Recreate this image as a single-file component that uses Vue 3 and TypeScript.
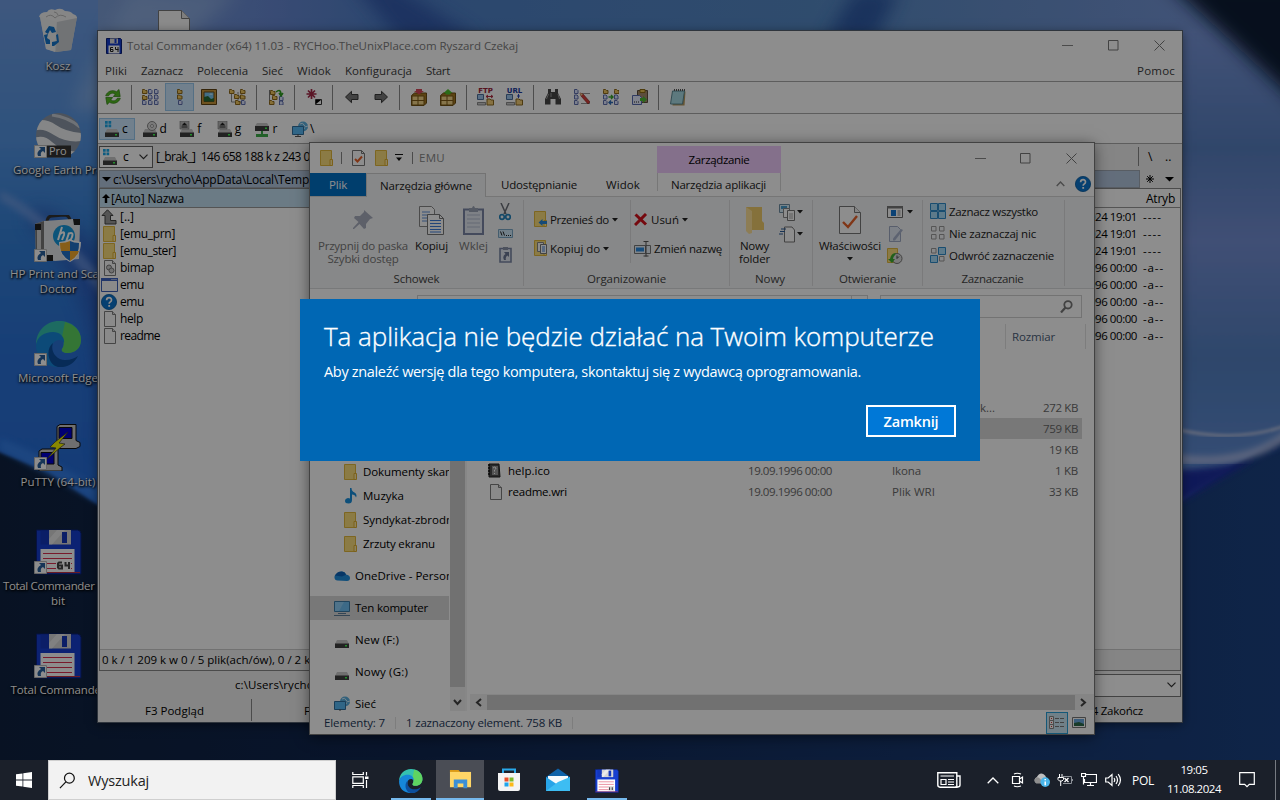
<script setup lang="ts">
import { h } from 'vue'
import type { Directive } from 'vue'

// Tracks a label so that it fills the given width.
const vFit: Directive<HTMLElement, number> = {
  mounted(el, { value }) {
    const range = document.createRange()
    range.selectNodeContents(el)
    const natural = range.getBoundingClientRect().width
    const count = (el.textContent ?? '').length
    if (count > 0) el.style.letterSpacing = `${((value - natural) / count).toFixed(3)}px`
  },
}

const folderBody =
  '<path d="M1.5.5h11v15h-11z" fill="#fbdf7e" stroke="#e3b93c"/><path d="M11 9.500h2.500v6H11z" fill="#ffe9a2" stroke="#e0b030"/>'
const pageBody =
  '<path d="M2.500.5h8l3 3v12h-11z" fill="#fafafa" stroke="#7d7d7d"/><path d="M10.500.5v3h3" fill="#ddd" stroke="#7d7d7d"/>'
const driveBody =
  '<path d="M3 8h10l2 4H1z" fill="#c9c9c9"/><path d="M1 11.500h14V16H1z" fill="#3f3f3f"/><path d="M11 13h2v1.500h-2z" fill="#3cff4f"/>'
const miniF = (x: number, y: number): string =>
  `<path d="M${x + 0.5} ${y + 1.5}v-1h2l1 1h1.500v3h-4.500z" fill="#f0c860" stroke="#8f6a1c"/>`
const miniD = (x: number, y: number): string =>
  `<path d="M${x + 0.5} ${y + 0.5}h2.500l1 1v3h-3.500z" fill="#dfe6ff" stroke="#5f6fae"/>`
const arrowBadge =
  '<path d="M.5 34.500h12v12H.5z" fill="#fff" stroke="#b9b9b9"/><path d="M5 36h6v6L9 40q-3 1-2 5H4q-2-4 3-7z" fill="#28609e"/>'
const floppyBody = (label: string): string =>
  `<path d="M2.500 3h41q3 0 3.500 3.500V47h-44.500z" fill="#173fd0" stroke="#0b2078"/><path d="M6.500 3.500h31v14h-31z" fill="#1437bb"/><path d="M15 3h22v14.500H15z" fill="#d5d5d5"/><path d="M18 17.500L31 3h-8L15 12v5.500z" fill="#fff" opacity=".5"/><path d="M28 5h5v11h-5z" fill="#1437bb"/><path d="M6.500 22h34v23h-34z" fill="#fff"/><path d="M9 26.500h29M9 31.500h29M9 36.500h29M9 41.500h29" stroke="#d93050"/><path d="M3 45.500h43" stroke="#c22f40"/>${label}`
const edgeBody =
  '<path d="M2 26C2 12 12 2 25 2c13 0 22 8 22 19 0 8-6 13-13 13-5 0-7-2-6-4 2-3 2-6 1-9-2-6-9-8-15-6C8 17 3 21 2 26z" fill="#35c1b0"/><path d="M31 3c10 3 16 9 16 18 0 8-6 13-13 13-5 0-7-2-6-4 3-4 2-8 0-12z" fill="#6ad84e" opacity=".8"/><path d="M2 26c1-8 8-13 17-13 7 0 12 5 11 11-1-2-3-3-5-3-5 0-8 5-7 11 2 8 9 13 18 12-4 4-9 5-14 4C10 47 2 38 2 26z" fill="#1687d9"/><path d="M19 24c-3 8 3 17 12 17 6 0 10-2 13-4-4 8-11 12-20 11C14 46 11 30 19 24z" fill="#0d4f9e"/>'
const netBody =
  '<circle cx="11" cy="5.500" r="5" fill="#5bb0e0"/><path d="M8 3q3-2 4 1t4 1M9 8l4-1" stroke="#d8f0ff" fill="none"/><path d="M.5 5.500h11v8H.5z" fill="#58b8f4" stroke="#2f6f9e"/><path d="M3 15.500h6M6 13v2" stroke="#555"/>'

const icons: Record<string, [number, number, string]> = {
  folder: [14, 16, folderBody],
  page: [15, 16, pageBody],
  gears: [15, 16, pageBody + '<circle cx="7" cy="7.500" r="2.500" fill="#ccc" stroke="#777"/><circle cx="9.500" cy="10.500" r="2.500" fill="#ccc" stroke="#777"/>'],
  app: [17, 14, '<path d="M.5.5h16v13H.5z" fill="#fafafa" stroke="#3c5fb5"/><path d="M0 0h17v3H0z" fill="#3c63c0"/><path d="M10.500 1.500h1m1 0h1m1 0h1" stroke="#fff"/>'],
  help: [16, 16, '<circle cx="8" cy="8" r="7.600" fill="#0b74cc" stroke="#085a9e" stroke-width=".8"/><path d="M5.600 6.200Q5.700 3.700 8.100 3.700T10.500 6q0 1.300-1.300 2-1 .5-1 1.700" fill="none" stroke="#fff" stroke-width="1.700"/><path d="M7.300 11h1.800v1.800H7.300z" fill="#fff"/>'],
  up: [16, 16, '<path d="M6.500.8L12 6.500H9.500v5H15V15H4V6.500H1z" fill="#9b9b9b" stroke="#444"/>'],
  drive: [16, 16, driveBody],
  drivec: [16, 16, driveBody + '<path d="M1 0h2.700v2.700H1zM4.500 0h2.700v2.700H4.500zM1 3.500h2.700v2.700H1zM4.500 3.500h2.700v2.700H4.500z" fill="#1ba6e8"/>'],
  drived: [16, 16, driveBody + '<circle cx="10" cy="5" r="4.500" fill="#ddd" stroke="#888"/><circle cx="10" cy="5" r="1.500" fill="#fff" stroke="#999"/>'],
  drivef: [16, 16, driveBody + '<path d="M1 0h9v8H1z" fill="#bbb" stroke="#777" stroke-width=".6"/><path d="M5.500 1.500l3 3h-6zM2.500 5.500h6v1h-6z" fill="#222"/>'],
  driver: [16, 16, '<path d="M3 2h10l2 3H1z" fill="#c9c9c9"/><path d="M1 5h14v5H1z" fill="#3f3f3f"/><path d="M11 6.500h2V8h-2z" fill="#3cff4f"/><path d="M7 10h2v3h5v3H2v-3h5z" fill="#3fae4a"/>'],
  net: [16, 16, netBody],
  tc16: [16, 16, '<path d="M.5.5h14l1 1v14H.5z" fill="#143ccf" stroke="#0a1f7a"/><path d="M4 .5h8v5H4z" fill="#ddd"/><path d="M8.500 1h2v4h-2z" fill="#143ccf"/><path d="M2.500 7.500h11v8h-11z" fill="#fff"/><path d="M7 9.500H4.500v4H7v-2H4.500M9.500 9v2.500h3M12 9v5" fill="none" stroke="#222"/>'],
  refresh: [16, 16, '<path d="M.7 6.800C2 2.500 7 .2 11.500 2.700L14 .5l1.200 7H8.400L10.300 5C7.500 3.300 5 4.300 3.600 6.800zM15.300 9.200c-1.300 4.300-6.300 6.600-10.800 4.100L2 15.500.8 8.500h6.800L5.700 11c2.800 1.700 5.300.7 6.700-1.800z" fill="#53bd24" stroke="#2f7f10" stroke-width=".7"/>'],
  brief: [18, 16, miniF(0, 0) + miniF(0, 6) + miniD(0, 11) + miniD(6, 0) + miniD(6, 5.500) + miniD(6, 11) + miniD(12, 0) + miniD(12, 5.500) + miniD(12, 11)],
  full: [16, 16, miniF(5, 0) + miniF(5, 5.500) + miniD(6, 11)],
  thumb: [16, 16, '<path d="M.5.5h15v15H.5z" fill="#c9973b" stroke="#5f4212"/><path d="M3 3h10v9.500H3z" fill="#7ac7ef" stroke="#6b4b16"/><path d="M3 12.500V8l4-1 3 3 3-1v3.500z" fill="#276b35"/><path d="M8 5.500l2-1 2 1z" fill="#fff"/>'],
  tree: [17, 16, '<path d="M2.500 3v10h5M9 3v5h3M9 8v5h3" fill="none" stroke="#888"/>' + miniF(0, 0) + miniF(5, 5) + miniF(6, 11) + miniF(11, 0) + miniF(11, 5.500) + miniD(12, 11)],
  branch: [16, 16, '<path d="M1.500 1v14" stroke="#777"/>' + miniF(2, 1) + miniF(4, 6) + miniF(1, 11) + miniD(11, 7) + miniD(11, 11.500) + '<path d="M8 3q5-4 5 3M11 4l2 3 2-3" fill="none" stroke="#2fa01f" stroke-width="1.500"/>'],
  invert: [16, 16, '<path d="M5.500 0v10M.5 5h10M2 1.500l7 7M9 1.500l-7 7" stroke="#a32846" stroke-width="1.700"/><path d="M9.500 10.500h6v5h-6z" fill="#fff" stroke="#333"/><path d="M10 11h5l-5 4z" fill="#000"/>'],
  back: [16, 16, '<path d="M1.500 8l6-5.700v3.200H14v5H7.500v3.200z" fill="#777" stroke="#3a3a3a"/>'],
  fwd: [16, 16, '<path d="M14.500 8l-6-5.700v3.200H2v5h6.500v3.200z" fill="#777" stroke="#3a3a3a"/>'],
  pack: [16, 17, '<path d="M.5 6.500l3-2.500h12v10l-2.500 2.500H.5z" fill="#a67a22" stroke="#6a4b10"/><path d="M1 7h12v9H1z" fill="#f2d488" stroke="#7d5a16"/><path d="M7 7v9M1 11.500h12" stroke="#7d5a16"/><path d="M5 0h6v2h2L8 5.500 3 2h2z" fill="#d8475a"/>'],
  unpack: [16, 17, '<path d="M.5 6.500l3-2.500h12v10l-2.500 2.500H.5z" fill="#a67a22" stroke="#6a4b10"/><path d="M1 7h12v9H1z" fill="#f2d488" stroke="#7d5a16"/><path d="M7 7v9M1 11.500h12" stroke="#7d5a16"/><path d="M8 0l4.500 4h-2v1.500h-5V4h-2z" fill="#4fc22c"/>'],
  ftp: [17, 12, '<path d="M.5.5h6v5h-6z" fill="#9fc8ef" stroke="#4b6f9c"/><path d="M.5 8.500h8v2.500h-8z" fill="#ccc" stroke="#666" stroke-width=".7"/><path d="M10 5h3l1 1h2.500v5H10z" fill="#f4cf78" stroke="#8c6a20"/><path d="M9 2.500h7M11 1L9 2.500 11 4M14 1l2 1.500L14 4" stroke="#b02a40" fill="none"/>'],
  url: [17, 12, '<path d="M.5.5h6v5h-6z" fill="#9fc8ef" stroke="#4b6f9c"/><path d="M.5 8.500h8v2.500h-8z" fill="#ccc" stroke="#666" stroke-width=".7"/><path d="M10 5h3l1 1h2.500v5H10z" fill="#f4cf78" stroke="#8c6a20"/><path d="M12.500 0v4M11 2h3" stroke="#2947b5" fill="none"/>'],
  bino: [16, 16, '<path d="M3 0h3v3h4V0h3v4l3 6v5.500h-5.500V10h-5v5.500H0V10l3-6z" fill="#474747"/><path d="M3.500 5L1.500 10M13 5l1.500 5M6 4v4" stroke="#999"/>'],
  rename: [16, 16, miniD(0, 0) + miniD(0, 5.500) + miniD(0, 11) + '<path d="M7 4.500h9M7 14.500h9" stroke="#999"/><path d="M6 4l3 1 7 8-2 2L7 7z" fill="#d6403c" stroke="#7d1914" stroke-width=".6"/><path d="M6 4l3 1-2 2z" fill="#f3d194"/>'],
  sync: [16, 16, miniF(0, 0) + miniF(11, 0) + miniD(0, 5.500) + miniD(0, 11) + miniD(11, 5.500) + miniD(11, 11) + '<path d="M5.500 8h4m-1.500-2l2 2-2 2" stroke="#38a52a" fill="none" stroke-width="1.400"/><path d="M6 13.500h4m-2-2l-2 2 2 2" stroke="#2f6bb8" fill="none" stroke-width="1.400"/>'],
  clip: [16, 16, '<path d="M5.500 1.500h10v12h-10z" fill="#a68c6c" stroke="#5f4e3a"/><path d="M8 .5h5v3H8z" fill="#e9c453" stroke="#8c6c14"/><path d="M.5 6.500h7l2 2v7h-9z" fill="#e8edff" stroke="#5a6bb0"/><path d="M2 13h1m1 0h1m1 0h1" stroke="#222"/><path d="M8 9h3V7l4 3.500-4 3.500v-2H8z" fill="#4cb833"/>'],
  note: [16, 17, '<path d="M3.500 2.500h12l-1 14h-12z" fill="#b9995c"/><path d="M2.500 2h12l-2 13h-12z" fill="#a9dbe4" stroke="#5b8a95"/><path d="M4 1h11" stroke="#555" stroke-dasharray="1 1" stroke-width="2"/>'],
  bin: [48, 48, '<path d="M6 10l37 0-6 33-15 2-10-3z" fill="#d9dde0"/><path d="M6 10l17 4-2 31-9-3z" fill="#eef0f1"/><path d="M23 14l20-4-6 33-15 2z" fill="#cdd1d4"/><path d="M5 10q1-5 8-5 2-4 8-2 6-3 10 1 6 0 8 3 4 1 4 4l-20 4z" fill="#f2f2f2"/><path d="M12 10q5-4 9 1 5-5 11-1M20 5q3 0 4 3" stroke="#bbb" fill="none"/><path d="M11 25l4-6 5 1 2 5-4 1-2-3-2 4zM10 28l4-1-1 4 3 2v4h-4zM18 35l5-1-1-6 2-1 1 8-5 4-2 0z" fill="#1576cc"/>'],
  earth: [48, 48, '<defs><clipPath id="ec"><circle cx="24.500" cy="24.500" r="22.500"/></clipPath></defs><g clip-path="url(#ec)"><path d="M0 0h48v48H0z" fill="#8c97a6"/><path d="M0 10q12-3 22 4t26 8v8q-16 2-28-6T0 20z" fill="#f1f3f5"/><path d="M0 27q10-4 18 4t26 10v8q-18-1-25-9T0 37z" fill="#f1f3f5"/><path d="M18 4q16 2 28 12" stroke="#c9ced6" stroke-width="3" fill="none"/></g><path d="M12 34.500h25v12H12z" fill="#333"/>' + arrowBadge],
  hp: [48, 48, '<path d="M13 6q1-5 5-5l12-1q5 0 6 5" fill="none" stroke="#333" stroke-width="3"/><path d="M1 9l9-3 29-2 7 4-1 36-24 2L2 43z" fill="#e3e6e9"/><path d="M1 9l9-3v38l-8-1z" fill="#777"/><path d="M3 12h4v30H3z" fill="#d0d0d0"/><path d="M1 9h6v6H1zM39 4h7v6h-6zM13 40h6v6h-6z" fill="#222"/><circle cx="30" cy="21" r="11" fill="#1698dc"/><path d="M28 12l-4 13M26 19q5-4 4 1l-2 5M35 18l-4 12M34 19q6-3 4 3t-6 3" stroke="#fff" stroke-width="2" fill="none"/><path d="M36 24q5 3 11 3 0 14-11 20-11-6-11-20 6 0 11-3z" fill="#fff"/><path d="M36 26v10h-9q-1-3-1-8 6 0 10-2zM36 36h9q-2 6-9 10z" fill="#f5ab2d"/><path d="M36 26q4 2 9 2 0 5-1 8h-8zM27 36h9v10q-7-4-9-10z" fill="#2372c9"/>' + arrowBadge],
  edge: [48, 48, edgeBody + arrowBadge],
  edgebar: [48, 48, edgeBody],
  putty: [48, 48, '<path d="M23 3.500l3-2h16v16l4 2v4l-4 2H24l-4-2 3-4z" fill="#c9c9c9" stroke="#111"/><path d="M25 4.500h13v11H25z" fill="#0000d0" stroke="#111"/><path d="M5 28l3-2h16v16l4 2v4H5z" fill="#c9c9c9" stroke="#111"/><path d="M7 29.500h13V41H7z" fill="#0000d0" stroke="#111"/><path d="M34 9L21 19l-5 5 6 1-9 11 14-12 4-3-6-1z" fill="#f5f500" stroke="#333" stroke-width=".7"/>' + arrowBadge],
  tc64: [48, 48, floppyBody('<path d="M22 34h15v9H22z" fill="#fff"/><path d="M28 35.500h-3l-1 1v4l1 1h3v-3h-4M31.500 35v3.500h4M35 35v7" fill="none" stroke="#444" stroke-width="2"/>') + arrowBadge],
  tc32: [48, 48, floppyBody('') + arrowBadge],
  tcbar: [48, 48, floppyBody('<path d="M28 35h11v9H28z" fill="#ddd"/><path d="M30 37v5M35 37v5" stroke="#333" stroke-width="2"/>')],
  bigpage: [32, 22, '<path d="M.5 22V.5h23l8 8V22z" fill="#fafafa" stroke="#777"/><path d="M23.500.5v8h8" fill="#e4e4e4" stroke="#777"/>'],
  docok: [13, 16, '<path d="M.5.5h9l3 3v12H.5z" fill="#fff" stroke="#777"/><path d="M9.500.5v3h3" fill="none" stroke="#777"/><path d="M3 9l2.500 2.500L10 6.500" fill="none" stroke="#e8622a" stroke-width="2"/>'],
  pin: [22, 22, '<path d="M12 1l9 8-3 1-4 5v4l-2 1-4.500-5L2 20H1v-1l5.500-6L2 9l1-2h5l4-4z" fill="#a9aebf"/>'],
  copy: [25, 29, '<path d="M.5.5h12l3 3v17H.5z" fill="#fff" stroke="#888"/><path d="M3 6h8M3 9h6M3 12h6M3 15h6" stroke="#5f8fd8"/><path d="M8.500 8.500h12l4 4v16h-16z" fill="#fff" stroke="#777"/><path d="M20.500 8.500v4h4" fill="none" stroke="#777"/><path d="M11 14.500h11M11 17.500h11M11 20.500h11M11 23.500h11M11 26h11" stroke="#3f7edb"/>'],
  paste: [21, 30, '<path d="M1 4.500h19V29H1z" fill="#e4e9f3" stroke="#7b87a6" stroke-width="2"/><path d="M4 10h13M4 14h13M4 18h13M4 22h13" stroke="#b5bfd3"/><path d="M6 3h3q1.500-4 3 0h3v4H6z" fill="#9aa3b5"/>'],
  cut: [12, 18, '<path d="M2 0l5 11M10 0L5 11" stroke="#6a6f78" stroke-width="1.500"/><circle cx="3" cy="14" r="2.300" fill="none" stroke="#2484bd" stroke-width="1.700"/><circle cx="9" cy="14" r="2.300" fill="none" stroke="#2484bd" stroke-width="1.700"/>'],
  path: [15, 10, '<path d="M.5.5h14v8H.5z" fill="#cfe8f8" stroke="#7ba8c8"/><path d="M2.500 2.500l1.500 4M5 2.500l1.500 4M8 6.500h1m1 0h1m1 0h1" stroke="#222"/>'],
  short: [13, 17, '<path d="M1 2.500h11V16H1z" fill="#e4e9f3" stroke="#7b87a6" stroke-width="1.600"/><path d="M4 1h5v3H4z" fill="#8c95a8"/><path d="M5 6h5v5L8.500 9.500Q6 11 7 14H5q-2-4 1.500-6z" fill="#6c7894"/>'],
  moveto: [14, 17, folderBody + '<path d="M5.500 11.500l4-3.500v2H14v3H9.500v2z" fill="#2a86d6"/>'],
  copyto: [14, 17, folderBody + '<path d="M4.500 2.500h6v9h-6z" fill="#fff" stroke="#888"/><path d="M7.500 4.500h6v9h-6z" fill="#fff" stroke="#777"/><path d="M9 7h3M9 9h3M9 11h3" stroke="#3f7edb"/>'],
  del: [14, 13, '<path d="M1.500 1.500l10.500 10M12 1l-11 11" stroke="#d3121c" stroke-width="3"/>'],
  ren: [17, 16, '<path d="M.5 4.500h11v8H.5zM12 4.500h4.500v8H12" fill="#e8f1fa" stroke="#777"/><path d="M2 6.500h8v4H2z" fill="#2c8be0"/><path d="M9.500.5h5M9.500 15h5M12 .5v15" stroke="#555"/>'],
  newf: [20, 29, '<path d="M1 1h16v14l2 2v7H4z" fill="#f1cc6b"/><path d="M1 1l6 4v22L4 28 1 25z" fill="#ffe29a"/>'],
  newitem: [17, 17, '<path d="M.5.5h10v8H.5z" fill="#d9eefa" stroke="#6f8ea3"/><path d="M2 2h6v3H2z" fill="#49a0d0"/><path d="M4.500 4.500h6v9h-6z" fill="#fff" stroke="#888"/><path d="M8.500 6.500h7v10h-7z" fill="#fff" stroke="#777"/><path d="M10 10h4M10 12h4M10 14h4" stroke="#aaa"/>'],
  easy: [17, 17, '<path d="M5.500 1h7.500l2.500 3v12H5.500z" fill="#fff" stroke="#777"/><path d="M2 3h5M1 5.500h5M0 8h4" stroke="#2d5d98" stroke-width="1.200"/>'],
  props: [22, 29, '<path d="M.5.5h15l6 6v21H.5z" fill="#fff" stroke="#777"/><path d="M15.500.5v6h6" fill="#eee" stroke="#777"/><path d="M4 16l5 5 9-11" fill="none" stroke="#e8622a" stroke-width="2.400"/>'],
  open: [16, 12, '<path d="M.5.5h15v11H.5z" fill="#fff" stroke="#666"/><path d="M0 0h16v2.500H0z" fill="#777"/><path d="M4 4h5v6H4z" fill="#1478d4"/><path d="M10.500 5h3m-3 2h3m-3 2h3" stroke="#888"/>'],
  edit: [16, 16, '<path d="M2.500.5h8l3 3v12h-11z" fill="#e3e9f5" stroke="#a0abc4"/><path d="M16 4L8 14.500H6v-2L14 3z" fill="#a9b4cc"/>'],
  hist: [16, 17, '<path d="M.5.5h10v14H.5z" fill="#fbdf7e" stroke="#e3b93c"/><circle cx="10" cy="10.500" r="5" fill="#ddd" stroke="#777"/><path d="M10 7.500v3l2-2" stroke="#444" fill="none"/><path d="M3 11q1-6 6-6l-1 2q-2 2-2 4h2l-3 4-4-4z" fill="#3fae2f"/>'],
  selall: [16, 16, '<path d="M.5.5h7v7h-7zM8.500.5h7v7h-7zM.5 8.500h7v7h-7zM8.500 8.500h7v7h-7z" fill="#a9dcfa" stroke="#2e8bcb"/>'],
  selnone: [16, 16, '<path d="M1.500 1.500h4.500v4.500h-4.500zM9.500 1.500h4.500v4.500h-4.500zM1.500 9.500h4.500v4.500h-4.500zM9.500 9.500h4.500v4.500h-4.500z" fill="none" stroke="#9a9a9a"/>'],
  selinv: [16, 16, '<path d="M8.500.5h7v7h-7zM.5 8.500h7v7h-7z" fill="#a9dcfa" stroke="#2e8bcb"/><path d="M1.500 1.500h4.500v4.500H1.500zM9.500 9.500h4.500v4.500H9.500z" fill="none" stroke="#9a9a9a"/>'],
  search: [13, 13, '<circle cx="8" cy="4.800" r="3.700" fill="none" stroke="#777" stroke-width="1.800"/><path d="M5.500 7.500L1 12.500" stroke="#777" stroke-width="2.200"/>'],
  music: [13, 16, '<path d="M6 0h1.500q0 3 3 4.500t1.500 5q-1-3-4-3V12q0 3.500-3.500 3.500T1 13t3-3q1 0 2 .5z" fill="#188fdd"/>'],
  cloud: [16, 10, '<path d="M3.500 9.500A3.300 3.300 0 0 1 3 3Q5 .3 8 .5T12 3.500q4 .5 4 3.500t-3 3z" fill="#1f8fdf"/><path d="M1 4.500Q3 .5 7 .5t5 3.200L8 5.500z" fill="#0c63b8"/>'],
  pc: [16, 16, '<path d="M.5 1.500h15v10H.5z" fill="#6fc0f5" stroke="#3d7ba6"/><path d="M1 2h9L5 11H1z" fill="#a6dcfb" opacity=".6"/><path d="M4 13.500h8M0 15.500h16" stroke="#5f7f9a"/>'],
  icobook: [13, 16, '<path d="M1 1h10l1 13H1z" fill="#4a4a4a" stroke="#222"/><path d="M4 3h6v9H4z" fill="#999"/><path d="M5 5q2-2 3 0 0 1-1.500 2v1.500M6.500 10v1" stroke="#fff" fill="none"/><path d="M0 2h2M0 5h2M0 8h2M0 11h2" stroke="#111" stroke-width="1.500"/>'],
  viewlist: [16, 14, '<path d="M.5.5h4v4h-4zM.5 4.500h4v4h-4zM.5 8.500h4v4h-4z" fill="#fff" stroke="#888"/><path d="M2 2.500h1M2 6.500h1M2 10.500h1" stroke="#c33"/><path d="M6 2.500h4m1 0h4M6 6.500h4m1 0h4M6 10.500h4m1 0h4" stroke="#777"/>'],
  viewpic: [14, 11, '<path d="M.5.5h13v10H.5z" fill="#fff" stroke="#777"/><path d="M2 2h10v7H2z" fill="#6aa8e0"/><path d="M2 6l5-1 5 2v2H2z" fill="#2d6b4a"/>'],
  win: [16, 16, '<path d="M0 2.300L6.500 1.400v6.200H0zM7.300 1.300L16 0v7.600H7.300zM0 8.400h6.500v6.200L0 13.700zM7.300 8.400H16V16l-8.700-1.300z" fill="#fff"/>'],
  mag: [18, 18, '<circle cx="11" cy="6.500" r="5.200" fill="none" stroke="#111" stroke-width="1.300"/><path d="M7.300 10.500L1 17" stroke="#111" stroke-width="1.300"/>'],
  task: [18, 16, '<path d="M.8 0v2.500h10.500V0M.8 4.800h10.500v6.500H.8zM.8 16v-2.500h10.500V16M14.500 0v3.500M14.500 8v8" fill="none" stroke="#fff" stroke-width="1.200"/><path d="M13 4.500h3.500V7H13z" fill="#fff"/>'],
  expl: [24, 20, '<path d="M1 0h9l2 2.500H1z" fill="#dc9a16"/><path d="M1 2h22v16H1z" fill="#ffd667"/><path d="M5 19v-9h14v9h-4v-5H9v5z" fill="#3c8fd6"/>'],
  store: [24, 24, '<path d="M6 6V1.500h12V6" fill="none" stroke="#29a9ea" stroke-width="2"/><path d="M1 5h22v16q0 2-2 2H3q-2 0-2-2z" fill="#f4f4f4"/><path d="M7.500 9.500h4v4h-4z" fill="#e8502a"/><path d="M12.500 9.500h4v4h-4z" fill="#7cba2a"/><path d="M7.500 14.500h4v4h-4z" fill="#1fa5ec"/><path d="M12.500 14.500h4v4h-4z" fill="#fcb917"/>'],
  mail: [24, 24, '<path d="M0 9l12-8.500L24 9v3H0z" fill="#0f62a8"/><path d="M2 8h20v9H2z" fill="#f7fafc"/><path d="M0 9l12 8 12-8v14H0z" fill="#28a4e8"/><path d="M0 23l12-9 12-5v14z" fill="#3dbdf3"/>'],
  news: [24, 16, '<path d="M.8.800h19v14.400H3Q.8 15 .8 13zM20 4h3v9q0 2-2.500 2H18" fill="none" stroke="#fff" stroke-width="1.400"/><path d="M3.500 4h13.500M11 7.500h6M11 10h6M11 12.500h6" stroke="#fff" stroke-width="1.200"/><path d="M4 7.500h5v5H4z" fill="none" stroke="#fff" stroke-width="1.200"/>'],
  chev: [12, 7, '<path d="M.7 6.300L6 1l5.300 5.300" fill="none" stroke="#fff" stroke-width="1.300"/>'],
  cam: [14, 16, '<path d="M1.500 4.500h7v7h-7zM8.500 7l3-2v6l-3-2M3 2q3-1.500 7 0M3 14q3 1.500 7 0" fill="none" stroke="#fff" stroke-width="1.200"/>'],
  cloudi: [16, 15, '<path d="M3 10.500A3 3 0 0 1 3.500 5Q6 0 10 2q2 1 2.500 3.500v5z" fill="#bfbfbf"/><path d="M3 10.500A3 3 0 0 1 3.500 5Q7 5 9 10.500z" fill="#8e8e8e"/><circle cx="11.500" cy="9.500" r="4.500" fill="#49b5ea"/><path d="M11.500 6.500v1.300M11.500 9v3.500" stroke="#fff" stroke-width="1.400"/>'],
  plug: [16, 14, '<path d="M2.500 1v3M5 1v3M1 4.500h5.500v2L5 8H2.500L1 6.500zM3.700 8v5" fill="none" stroke="#fff"/><path d="M6 3.500h8.500v7H6M15.500 6v2" fill="none" stroke="#8c9097"/><path d="M7.500 5l4 4m0-4l-4 4" stroke="#fff" stroke-width="1.300"/>'],
  lan: [16, 14, '<path d="M5 1.500h10.500v8H3.500V6M9.500 9.500v3M6 12.500h7M.5 .5h4v3h-4zM2.500 3.500v8" fill="none" stroke="#fff" stroke-width="1.200"/>'],
  vol: [17, 14, '<path d="M.7 5h2.500L7 1.500v11L3.200 9H.7zM9 5q1.500 2 0 4M11 3q3 4 0 8M13.200 1.200q4.500 5.800 0 11.600" fill="none" stroke="#fff" stroke-width="1.200"/>'],
  note2: [16, 16, '<path d="M.7.7h14.600v11.600h-5L8 14.700 5.700 12.300h-5z" fill="none" stroke="#fff" stroke-width="1.200"/>'],
  min: [11, 11, '<path d="M0 5.500h11" stroke="#888"/>'],
  max: [11, 11, '<path d="M.5.5h9.500v9.500H.5z" fill="none" stroke="#777"/>'],
  close: [11, 11, '<path d="M.5.5l10 10m0-10l-10 10" stroke="#777"/>'],
  tri: [6, 4, '<path d="M0 0h6L3 3.500z" fill="#222"/>'],
  triover: [8, 8, '<path d="M0 .5h8" stroke="#111"/><path d="M1 3.500h6L4 7z" fill="#111"/>'],
  bigtri: [9, 5, '<path d="M0 0h9L4.500 4.500z" fill="#000"/>'],
  uparr: [8, 9, '<path d="M4 0l4 4H5.200v5H2.800V4H0z" fill="#000"/>'],
  star: [8, 8, '<path d="M4 0v8M0 4h8M1.200 1.200l5.600 5.600M6.800 1.200L1.200 6.800" stroke="#000"/>'],
  down: [9, 6, '<path d="M.5.7l4 4 4-4" fill="none" stroke="#333" stroke-width="1.200"/>'],
  sdown: [9, 7, '<path d="M1 1l3.500 4L8 1" fill="none" stroke="#444" stroke-width="2"/>'],
  sleft: [7, 9, '<path d="M6 1L2 4.500 6 8" fill="none" stroke="#444" stroke-width="2"/>'],
  sright: [7, 9, '<path d="M1 1l4 3.500L1 8" fill="none" stroke="#444" stroke-width="2"/>'],
  collapse: [9, 6, '<path d="M.7 5L4.500 1l3.800 4" fill="none" stroke="#888" stroke-width="1.400"/>'],
}

interface IcProps { n: string; s?: number }
const Ic = (p: IcProps) => {
  const [w, ht, body] = icons[p.n]
  const width = p.s ?? w
  return h('svg', {
    width,
    height: (ht * width) / w,
    viewBox: `0 0 ${w} ${ht}`,
    style: 'display:block;flex:none',
    innerHTML: body,
  })
}
Ic.props = ['n', 's']

const desktop: { icon: string; lines: [string, number][] }[] = [
  { icon: 'bin', lines: [['Kosz', 25]] },
  { icon: 'earth', lines: [['Google Earth Pro', 90]] },
  { icon: 'hp', lines: [['HP Print and Scan', 96], ['Doctor', 37]] },
  { icon: 'edge', lines: [['Microsoft Edge', 80]] },
  { icon: 'putty', lines: [['PuTTY (64-bit)', 75]] },
  { icon: 'tc64', lines: [['Total Commander 64-', 110], ['bit', 14]] },
  { icon: 'tc32', lines: [['Total Commander', 95]] },
]
const menu: [string, number][] = [['Pliki', 22], ['Zaznacz', 42], ['Polecenia', 51], ['Sieć', 21], ['Widok', 34], ['Konfiguracja', 67], ['Start', 24]]
const tools = ['refresh', '|', 'brief', 'full', 'thumb', 'tree', '|', 'branch', '|', 'invert', '|', 'back', 'fwd', '|', 'pack', 'unpack', '|', 'ftp', 'url', '|', 'bino', 'rename', 'sync', 'clip', '|', 'note']
const drives = [['drivec', 'c'], ['drived', 'd'], ['drivef', 'f'], ['drivef', 'g'], ['driver', 'r'], ['net', '\\']]
const files: [string, string, number][] = [['up', '[..]', 14], ['folder', '[emu_prn]', 55], ['folder', '[emu_ster]', 56], ['gears', 'bimap', 34], ['app', 'emu', 24], ['help', 'emu', 24], ['page', 'help', 23], ['page', 'readme', 40]]
const rightRows = [['11.08.2024 19:01', '----'], ['11.08.2024 19:01', '----'], ['11.08.2024 19:01', '----'], ['19.09.1996 00:00', '-a--'], ['19.09.1996 00:00', '-a--'], ['19.09.1996 00:00', '-a--'], ['19.09.1996 00:00', '-a--'], ['19.09.1996 00:00', '-a--']]
const nav: { icon: string; text: string; w: number; deep?: boolean; on?: boolean }[] = [
  { icon: 'folder', text: 'Dokumenty skan', w: 89, deep: true },
  { icon: 'music', text: 'Muzyka', w: 41, deep: true },
  { icon: 'folder', text: 'Syndykat-zbrodn', w: 90, deep: true },
  { icon: 'folder', text: 'Zrzuty ekranu', w: 72, deep: true },
  { icon: 'cloud', text: 'OneDrive - Person', w: 98 },
  { icon: 'pc', text: 'Ten komputer', w: 73, on: true },
  { icon: 'drive', text: 'New (F:)', w: 44 },
  { icon: 'drive', text: 'Nowy (G:)', w: 53 },
  { icon: 'net', text: 'Sieć', w: 21 },
]
const rows: { icon: string; name: string; nw: number; date: string; type: string; tw: number; size: string; sw: number; on?: boolean }[] = [
  { icon: '', name: '', nw: 0, date: '', type: 'k...', tw: 15, size: '272 KB', sw: 35 },
  { icon: '', name: '', nw: 0, date: '', type: '', tw: 0, size: '759 KB', sw: 35, on: true },
  { icon: '', name: '', nw: 0, date: '', type: '', tw: 0, size: '19 KB', sw: 29 },
  { icon: 'icobook', name: 'help.ico', nw: 42, date: '19.09.1996 00:00', type: 'Ikona', tw: 29, size: '1 KB', sw: 23 },
  { icon: 'page', name: 'readme.wri', nw: 59, date: '19.09.1996 00:00', type: 'Plik WRI', tw: 43, size: '33 KB', sw: 29 },
]
</script>

<template>
  <div class="screen">
    <svg class="wall" width="1280" height="760" viewBox="0 0 1280 760">
      <defs>
        <linearGradient id="wl" x1="0" y1="0" x2="0" y2="1">
          <stop offset="0" stop-color="#749fe4" /><stop offset=".25" stop-color="#5494e2" />
          <stop offset=".4" stop-color="#3480d8" /><stop offset=".6" stop-color="#2a70d8" /><stop offset="1" stop-color="#2468d8" />
        </linearGradient>
        <linearGradient id="wt" x1="0" y1="0" x2="1" y2="0">
          <stop offset="0" stop-color="#7ea0d8" /><stop offset=".15" stop-color="#6688d2" /><stop offset=".25" stop-color="#4f80c8" />
          <stop offset=".6" stop-color="#568ac6" /><stop offset=".76" stop-color="#6790cc" /><stop offset="1" stop-color="#7c98dc" />
        </linearGradient>
        <linearGradient id="wr" x1="0" y1="0" x2="0" y2="1">
          <stop offset="0" stop-color="#7896da" /><stop offset=".25" stop-color="#587fc0" /><stop offset=".45" stop-color="#748fd4" />
          <stop offset=".7" stop-color="#5480c2" /><stop offset="1" stop-color="#628fd8" />
        </linearGradient>
        <linearGradient id="wb" x1="0" y1="0" x2="1" y2="0">
          <stop offset="0" stop-color="#0f2240" /><stop offset=".3" stop-color="#10264f" /><stop offset="1" stop-color="#1c4282" />
        </linearGradient>
        <filter id="b3"><feGaussianBlur stdDeviation="3" /></filter>
        <filter id="b8" x="-50%" y="-50%" width="200%" height="200%"><feGaussianBlur stdDeviation="9" /></filter>
        <filter id="b1"><feGaussianBlur stdDeviation="1.500" /></filter>
      </defs>
      <rect width="1280" height="760" fill="url(#wb)" />
      <path d="M-20 -20H310V620L98 505 50 473 -20 444z" fill="url(#wl)" filter="url(#b1)" />
      <path d="M98 -10H1290V60H98z" fill="url(#wt)" />
      <path d="M70 110L130 -10H240L110 110z" fill="#a3bfe8" opacity=".5" filter="url(#b8)" />
      <path d="M350 -20L400 40H480L370 -30z" fill="#2f52a8" opacity=".8" filter="url(#b8)" />
      <path d="M855 -10L825 40H875L900 -10z" fill="#2a56a4" opacity=".9" filter="url(#b8)" />
      <path d="M30 225Q70 260 90 330 110 400 98 450H130V280Q60 200 30 210z" fill="#2a4cac" opacity=".55" filter="url(#b8)" />
      <path d="M0 190Q60 220 120 300V320Q60 235 0 200z" fill="#7fa4e8" opacity=".6" filter="url(#b3)" />
      <path d="M0 450Q30 464 98 503V488Q40 453 0 438z" fill="#3a86ee" opacity=".7" filter="url(#b3)" />
      <path d="M1150 30H1290V434Q1230 465 1182 500H1150z" fill="url(#wr)" filter="url(#b1)" />
      <path d="M1150 470Q1230 472 1280 448V445L1230 474 1182 502 1150 510z" fill="#1a2fa0" filter="url(#b3)" />
      <path d="M1150 422Q1230 448 1290 424" fill="none" stroke="#b3bfe0" stroke-width="3" filter="url(#b1)" />
      <path d="M1150 454Q1240 474 1290 432" fill="none" stroke="#a8b8e4" stroke-width="8" filter="url(#b3)" />
      <path d="M1165 -20Q1220 30 1310 115V-20z" fill="#0c1a36" filter="url(#b8)" />
    </svg>

    <div class="dicons">
      <div v-for="d in desktop" :key="d.icon" class="dicon">
        <Ic :n="d.icon" />
        <div class="dlabel"><span v-for="l in d.lines" :key="l[0]" v-fit="l[1]">{{ l[0] }}</span></div>
        <b v-if="d.icon === 'earth'" class="pro">Pro</b>
      </div>
    </div>
    <div class="looseicon"><Ic n="bigpage" /></div>

    <section class="tc">
      <header class="tctitle"><Ic n="tc16" /><span v-fit="391">Total Commander (x64) 11.03 - RYCHoo.TheUnixPlace.com Ryszard Czekaj</span>
        <div class="winbtns"><Ic n="min" /><Ic n="max" /><Ic n="close" /></div></header>
      <nav class="tcmenu"><span v-for="m in menu" :key="m[0]" v-fit="m[1]">{{ m[0] }}</span><span v-fit="38" class="right">Pomoc</span></nav>
      <div class="tools">
        <template v-for="(t, i) in tools" :key="i">
          <i v-if="t === '|'" class="tsep"></i>
          <div v-else class="tool" :class="{ on: t === 'full', low: t === 'ftp' || t === 'url' }">
            <Ic :n="t" /><b v-if="t === 'ftp' || t === 'url'" :class="t">{{ t.toUpperCase() }}</b>
          </div>
        </template>
      </div>
      <div class="drives"><div v-for="(d, i) in drives" :key="i" class="drv" :class="{ on: i === 0 }"><Ic :n="d[0]" /><span>{{ d[1] }}</span></div></div>
      <div class="drvline">
        <div class="combo"><Ic n="drivec" /><span>c</span><Ic n="down" /></div>
        <span v-fit="175" class="free">[_brak_]&nbsp; 146 658 188 k z 243 000 k</span>
        <i class="vl"></i><span class="bs">\</span><span class="dots">..</span>
      </div>
      <div class="pathline"><div class="path"><Ic n="bigtri" /><span v-fit="196">c:\Users\rycho\AppData\Local\Temp</span></div><div class="pbtn"><Ic n="star" /><Ic n="bigtri" /></div></div>
      <div class="panels">
        <div class="panel lp">
          <div class="colhead blue"><Ic n="uparr" /><span v-fit="73">[Auto] Nazwa</span></div>
          <div class="plist">
            <div v-for="(f, i) in files" :key="i" class="prow"><div class="pic"><Ic :n="f[0]" /></div><span v-fit="f[2]">{{ f[1] }}</span></div>
          </div>
          <div class="pstat"><span v-fit="231">0 k / 1 209 k w 0 / 5 plik(ach/ów), 0 / 2 katal.</span></div>
        </div>
        <div class="panel rp">
          <div class="colhead"><span class="atryb" v-fit="29">Atryb</span></div>
          <div class="plist">
            <div v-for="(r, i) in rightRows" :key="i" class="rrow"><span v-fit="84">{{ r[0] }}</span><span v-fit="i > 2 ? 21 : 19">{{ r[1] }}</span></div>
          </div>
          <div class="pstat"></div>
        </div>
      </div>
      <div class="cmd"><span v-fit="83">c:\Users\rycho\</span><div class="cmdbox"><Ic n="down" /></div></div>
      <div class="fkeys"><div><span v-fit="59">F3 Podgląd</span></div><div><span v-fit="55">F4 Edycja</span></div><div class="last"><span v-fit="77">Alt+F4 Zakończ</span></div></div>
    </section>

    <section class="ex">
      <header class="extitle">
        <Ic n="folder" /><i></i><Ic n="docok" /><Ic n="folder" /><Ic n="triover" /><i></i><span v-fit="26" class="emu">EMU</span>
        <div class="manage"><span v-fit="61">Zarządzanie</span></div>
        <div class="winbtns"><Ic n="min" /><Ic n="max" /><Ic n="close" /></div>
      </header>
      <nav class="tabs">
        <div class="plik"><span v-fit="18">Plik</span></div><div class="act"><span v-fit="92">Narzędzia główne</span></div>
        <div class="udo"><span v-fit="76">Udostępnianie</span></div><div class="wid"><span v-fit="34">Widok</span></div>
        <div class="appt"><span v-fit="95">Narzędzia aplikacji</span></div>
        <div class="rhelp"><Ic n="collapse" /><Ic n="help" /></div>
      </nav>
      <div class="ribbon">
        <div class="grp g1">
          <div class="gb">
            <div class="big dis"><div class="bi"><Ic n="pin" /></div><span v-fit="90">Przypnij do paska</span><span v-fit="71">Szybki dostęp</span></div>
            <div class="big"><div class="bi"><Ic n="copy" /></div><span v-fit="33">Kopiuj</span></div>
            <div class="big dis"><div class="bi"><Ic n="paste" /></div><span v-fit="29">Wklej</span></div>
            <div class="smalls"><Ic n="cut" /><Ic n="path" /><Ic n="short" /></div>
          </div>
          <div class="gl"><span v-fit="46">Schowek</span></div>
        </div>
        <div class="grp g2">
          <div class="gb">
            <div class="two"><div><Ic n="moveto" /><span v-fit="59">Przenieś do</span><Ic n="tri" /></div><div><Ic n="copyto" /><span v-fit="50">Kopiuj do</span><Ic n="tri" /></div></div>
            <div class="two sec"><div><Ic n="del" /><span v-fit="28">Usuń</span><Ic n="tri" /></div><div><Ic n="ren" /><span v-fit="68">Zmień nazwę</span></div></div>
          </div>
          <div class="gl"><span v-fit="79">Organizowanie</span></div>
        </div>
        <div class="grp g3">
          <div class="gb">
            <div class="big"><div class="bi"><Ic n="newf" /></div><span v-fit="29">Nowy</span><span v-fit="31">folder</span></div>
            <div class="smalls2"><div><Ic n="newitem" /><Ic n="tri" /></div><div><Ic n="easy" /><Ic n="tri" /></div></div>
          </div>
          <div class="gl"><span v-fit="30">Nowy</span></div>
        </div>
        <div class="grp g4">
          <div class="gb">
            <div class="big"><div class="bi"><Ic n="props" /></div><span v-fit="62">Właściwości</span><Ic n="tri" class="btri" /></div>
            <div class="smalls2"><div><Ic n="open" /><Ic n="tri" /></div><div><Ic n="edit" /></div><div><Ic n="hist" /></div></div>
          </div>
          <div class="gl"><span v-fit="57">Otwieranie</span></div>
        </div>
        <div class="grp g5">
          <div class="gb three">
            <div><Ic n="selall" /><span v-fit="89">Zaznacz wszystko</span></div><div><Ic n="selnone" /><span v-fit="87">Nie zaznaczaj nic</span></div><div><Ic n="selinv" /><span v-fit="105">Odwróć zaznaczenie</span></div>
          </div>
          <div class="gl"><span v-fit="62">Zaznaczanie</span></div>
        </div>
      </div>
      <div class="addr"><div class="abox"><Ic n="folder" /><i></i></div><div class="sbox"><Ic n="search" /></div></div>
      <div class="exbody">
        <div class="nav">
          <div v-for="n in nav" :key="n.text" class="nrow" :class="{ deep: n.deep, on: n.on }"><div class="nic"><Ic :n="n.icon" /></div><span v-fit="n.w">{{ n.text }}</span></div>
        </div>
        <div class="vscroll"><div class="vthumb"></div><Ic n="sdown" /></div>
        <div class="content">
          <div class="chead"><span v-fit="43">Rozmiar</span></div>
          <div class="crows">
            <div v-for="(r, i) in rows" :key="i" class="crow" :class="{ on: r.on }">
              <div class="cic"><Ic v-if="r.icon" :n="r.icon" /></div>
              <div class="cn"><span v-fit="r.nw">{{ r.name }}</span></div>
              <div><span v-fit="84">{{ r.date }}</span></div>
              <div class="ct" :class="{ end: i === 0 }"><span v-fit="r.tw">{{ r.type }}</span></div>
              <div class="cs"><span v-fit="r.sw">{{ r.size }}</span></div>
            </div>
          </div>
          <div class="hscroll"><Ic n="sleft" /><div class="hthumb"></div><Ic n="sright" /></div>
        </div>
      </div>
      <footer class="exstat"><span v-fit="61">Elementy: 7</span><i></i><span v-fit="156">1 zaznaczony element. 758 KB</span><i></i>
        <div class="views"><div class="v1"><Ic n="viewlist" /></div><Ic n="viewpic" /></div></footer>
    </section>

    <div class="dim"></div>

    <section class="dlg">
      <h1><span v-fit="610">Ta aplikacja nie będzie działać na Twoim komputerze</span></h1>
      <p><span v-fit="537">Aby znaleźć wersję dla tego komputera, skontaktuj się z wydawcą oprogramowania.</span></p>
      <button type="button"><span v-fit="55">Zamknij</span></button>
    </section>

    <footer class="bar">
      <div class="start"><Ic n="win" /></div>
      <div class="find"><Ic n="mag" :s="17" /><span v-fit="61">Wyszukaj</span></div>
      <div class="tb"><Ic n="task" /></div>
      <div class="tb run"><Ic n="edgebar" :s="25" /></div>
      <div class="tb cur"><Ic n="expl" :s="23" /></div>
      <div class="tb"><Ic n="store" /></div>
      <div class="tb"><Ic n="mail" /></div>
      <div class="tb run"><Ic n="tcbar" :s="25" /></div>
      <div class="tray"><Ic n="news" /><Ic n="chev" /><Ic n="cam" /><Ic n="cloudi" :s="17" /><Ic n="plug" /><Ic n="lan" /><Ic n="vol" /><span v-fit="22" class="pol">POL</span>
        <div class="clock"><span v-fit="27">19:05</span><span v-fit="54">11.08.2024</span></div><Ic n="note2" /><i></i></div>
    </footer>
  </div>
</template>

<style>
html, body { margin: 0; overflow: hidden; }
</style>

<style scoped>
* { box-sizing: border-box; }
.screen { position: relative; width: 1280px; height: 800px; overflow: hidden; font: 11.5px/15px "Open Sans", "Noto Sans", sans-serif; color: #000; background: #10244a; }
span { white-space: nowrap; flex: none; }
.wall { position: absolute; left: 0; top: 0; }
.dim { position: absolute; left: 0; top: 0; width: 1280px; height: 760px; background: rgba(0, 0, 0, 0.447); }
.dicons { position: absolute; left: 0; top: 0; width: 116px; }
.dicon { height: 104px; padding-top: 7px; display: flex; flex-direction: column; align-items: center; position: relative; }
.dlabel { margin-top: 3px; display: flex; flex-direction: column; align-items: center; color: #fff; text-shadow: 1px 1px 2px #000, 0 1px 3px #000; }
.pro { position: absolute; left: 49px; top: 40px; color: #fff; font-weight: 400; font-size: 11px; line-height: 14px; }
.looseicon { position: absolute; left: 158px; top: 10px; }

.tc { position: absolute; left: 98px; top: 31px; width: 1084px; height: 691px; background: #f0f0f0; box-shadow: 0 0 0 1px #55606f, 0 2px 10px rgba(0, 0, 0, 0.5); display: flex; flex-direction: column; }
.tctitle { height: 29px; background: #fff; display: flex; align-items: center; padding-left: 8px; gap: 5px; color: #7d7d7d; }
.winbtns { margin-left: auto; display: flex; gap: 35px; margin-right: 17px; }
.tcmenu { height: 22px; background: #fff; display: flex; align-items: center; gap: 14px; padding: 0 7px 0 7px; color: #404040; border-bottom: 1px solid #a8a8a8; }
.tcmenu .right { margin-left: auto; }
.tools { height: 32px; background: #fff; border-bottom: 1px solid #a8a8a8; display: flex; align-items: center; padding-bottom: 1px; }
.tool { width: 29px; height: 28px; display: flex; align-items: center; justify-content: center; position: relative; }
.tool.on { background: #cce8ff; border: 1px solid #99c9ef; }
.tool.low { align-items: flex-end; padding-bottom: 5px; }
.tool b { position: absolute; top: 4px; left: 0; width: 29px; text-align: center; font: bold 7px/8px "DejaVu Sans", sans-serif; color: #9b2137; }
.tool b.url { color: #1c3ba0; }
.tsep { width: 1px; height: 25px; margin: 0 4px; background: #8c8c8c; }
.drives { height: 30px; background: #fff; border-bottom: 1px solid #a8a8a8; display: flex; align-items: center; padding-left: 1px; gap: 1.600px; font-size: 12px; }
.drv { width: 36px; height: 22px; display: flex; align-items: center; gap: 2px; padding-left: 5px; }
.drv.on { background: #cce8ff; border: 1px solid #99c9ef; padding-left: 4px; }
.drvline { height: 25px; display: flex; align-items: center; padding-left: 1px; font-size: 12px; }
.combo { width: 54px; height: 22px; background: #fff; border: 1px solid #666; display: flex; align-items: center; padding: 0 4px 0 2px; }
.combo span { margin: 0 auto 0 5px; }
.free { margin-left: 3px; }
.vl { width: 1px; height: 19px; background: #888; margin-left: auto; margin-right: 9px; }
.bs { width: 17px; }
.dots { width: 17px; }
.pathline { height: 19px; display: flex; padding: 1px 0 0 1px; }
.path { width: 1041px; height: 18px; background: #b4c7df; border: 1px solid #a0a8b4; display: flex; align-items: center; gap: 2px; padding-left: 2px; font-size: 12px; }
.pbtn { display: flex; align-items: center; gap: 11px; padding-left: 6px; }
.panels { flex: 1; display: grid; grid-template-columns: 540px 1fr; padding: 0 1px 0 1px; }
.panel { display: flex; flex-direction: column; background: #fff; border: 1px solid #888; }
.colhead { height: 19px; border-bottom: 1px solid #999; display: flex; align-items: center; gap: 1px; padding-left: 2px; font-size: 12px; }
.colhead.blue { background: #c2def0; }
.atryb { margin-left: auto; margin-right: 5px; }
.plist { flex: 1; }
.prow { height: 17px; display: flex; align-items: center; font-size: 12px; }
.pic { width: 18px; margin-right: 2px; display: flex; justify-content: center; }
.rrow { height: 17px; display: grid; grid-template-columns: 1fr 37px; align-items: center; column-gap: 6px; font-size: 11.5px; }
.rrow span:first-child { justify-self: end; }
.pstat { height: 21px; background: #f0f0f0; border-top: 1px solid #ccc; display: flex; align-items: center; padding: 0 0 2px 2px; }
.cmd { height: 28px; display: flex; align-items: center; padding: 0 1px 0 137px; gap: 6px; }
.cmd span { margin-bottom: 2px; }
.cmdbox { height: 23px; flex: 1; background: #fff; border: 1px solid #777; display: flex; align-items: center; justify-content: flex-end; padding-right: 4px; }
.fkeys { height: 23px; display: grid; grid-template-columns: 154px 154px 1fr; padding-bottom: 1px; }
.fkeys div { display: flex; justify-content: center; align-items: center; border-right: 1px solid #888; }
.fkeys div.last { justify-content: flex-end; border: 0; padding-right: 39px; }
.fkeys div:nth-child(2) { justify-content: flex-start; padding-left: 52px; border: 0; }

.ex { position: absolute; left: 310px; top: 143px; width: 784px; height: 591px; background: #fff; box-shadow: 0 0 0 1px #777, 0 2px 14px rgba(0, 0, 0, 0.55); display: flex; flex-direction: column; overflow: hidden; }
.extitle { height: 30px; display: flex; align-items: center; padding-left: 9px; }
.extitle > i { width: 1px; height: 12px; background: #888; margin: 0 10px 0 8px; }
.extitle > svg:nth-of-type(2) { margin-right: 9px; }
.extitle > svg:nth-of-type(3) { margin-right: 7px; }
.extitle > i:nth-of-type(2) { margin: 0 6px 0 9px; }
.extitle .winbtns { margin-right: 17.5px; gap: 34.5px; }
.emu { color: #888; margin-bottom: 2px; }
.manage { width: 124px; height: 27px; align-self: flex-end; margin-left: 212px; background: #efcbfb; display: flex; align-items: center; justify-content: center; }
.tabs { height: 24px; border-bottom: 1px solid #d5d5d5; display: flex; color: #222; }
.tabs > div { display: flex; align-items: center; justify-content: center; }
.plik { width: 56px; background: #0070c6; color: #fff; }
.act { width: 120px; background: #f5f6f7; border: 1px solid #d0d0d0; border-bottom: 0; margin-bottom: -1px; }
.udo { width: 106px; }
.wid { width: 62px; }
.appt { width: 124px; margin-left: 3px; border: 1px solid #d8d8d8; border-width: 0 1px; margin-bottom: 5px; padding-top: 4px; }
.tabs > .appt > span { margin-left: -1px; }
.rhelp { margin-left: auto; padding-right: 3px; gap: 10px; margin-top: -1px; }
.ribbon { height: 92px; flex: none; background: #f5f6f7; border-bottom: 1px solid #dadbdc; display: flex; padding-top: 3px; color: #222; }
.grp { height: 86px; border-right: 1px solid #dcdddf; display: flex; flex-direction: column; }
.gb { height: 71px; display: flex; }
.gl { display: flex; justify-content: center; color: #444; margin-top: 1px; }
.g1 { width: 214px; }
.g2 { width: 206px; }
.g3 { width: 83px; }
.g3 .gl { padding-right: 2px; }
.g4 { width: 110px; }
.g5 { width: 142px; }
.g5 .gl { padding-right: 2px; }
.big { display: flex; flex-direction: column; align-items: center; line-height: 13px; }
.bi { height: 39px; display: flex; align-items: center; padding-top: 1px; }
.big.dis { color: #777; }
.g1 .big:nth-child(1) { width: 90px; margin-left: 8px; }
.g1 .big:nth-child(2) { width: 33px; margin-left: 7px; }
.g1 .big:nth-child(3) { width: 29px; margin-left: 11px; }
.smalls { width: 16px; margin-left: 9px; display: flex; flex-direction: column; align-items: center; justify-content: space-between; padding: 3px 0 7px; }
.two { width: 106px; padding: 5px 0 0 9px; display: flex; flex-direction: column; color: #222; }
.two > div { height: 29px; flex: none; display: flex; align-items: center; gap: 3px; }
.two.sec { border-left: 1px solid #dcdddf; width: 99px; padding-left: 3px; height: 63px; }
.g3 .big { margin-left: 9px; width: 31px; }
.smalls2 { margin-left: 9px; padding-top: 1px; }
.smalls2 > div { height: 22px; display: flex; align-items: center; gap: 1px; }
.g4 .big { margin-left: 6px; width: 62px; }
.g4 .smalls2 { margin-left: 6px; }
.g4 .smalls2 > div { gap: 4px; }
.btri { margin-top: 5px; }
.three { flex-direction: column; padding: 0 0 0 7px; }
.three > div { height: 22px; display: flex; align-items: center; gap: 3px; }
.addr { height: 33px; flex: none; padding-top: 6px; display: flex; }
.abox { margin-left: 107px; width: 451px; height: 23px; border: 1px solid #d0d0d0; display: flex; align-items: center; padding-left: 3px; justify-content: space-between; }
.abox i { width: 1px; height: 21px; background: #d0d0d0; margin-right: 15px; }
.sbox { margin-left: 12px; width: 202px; height: 23px; border: 1px solid #d0d0d0; display: flex; align-items: center; justify-content: flex-end; padding-right: 8px; }
.exbody { height: 389px; flex: none; display: grid; grid-template-columns: 140px 15px 629px; }
.nav { padding-top: 138px; height: 389px; overflow: hidden; }
.nrow { height: 24px; margin-bottom: 8px; display: flex; align-items: center; padding-left: 24px; width: 139px; overflow: hidden; }
.nrow span { margin-bottom: 1px; line-height: 15px; }
.nic { width: 16px; flex: none; margin-right: 5px; display: flex; justify-content: center; }
.nrow.deep { padding-left: 32px; margin-bottom: 0; }
.nrow.deep:nth-child(4) { margin-bottom: 8px; }
.nrow.on { background: #d9d9d9; }
.vscroll { background: #f0f0f0; display: flex; flex-direction: column; align-items: center; justify-content: flex-end; padding-bottom: 5px; height: 389px; gap: 12px; }
.vthumb { width: 15px; flex: 1; background: #cdcdcd; }
.content { height: 389px; display: flex; flex-direction: column; padding-left: 3px; border-left: 2px solid #f4f4f4; }
.chead { height: 25px; margin-top: 2px; margin-left: 535px; width: 81px; border: 1px solid #e2e2e2; border-width: 0 1px; display: flex; align-items: center; padding-left: 6px; color: #4c607a; }
.crows { margin-top: 48px; flex: 1; }
.crow { height: 21px; display: grid; grid-template-columns: 38px 240px 144px 108px 82px; align-items: center; width: 612px; color: #6a6a6a; }
.cic { padding-left: 18px; }
.cn { color: #000; }
.crow.on { background: #d9d9d9; }
.end { justify-self: end; padding-right: 5px; }
.cs { justify-self: end; padding-right: 4px; }
.hscroll { height: 16px; background: #f0f0f0; display: flex; align-items: center; gap: 5px; padding-left: 5px; margin-bottom: 1px; }
.hthumb { width: 588px; height: 15px; background: #cdcdcd; }
.exstat { flex: 1; display: flex; align-items: center; padding-left: 14px; color: #1e395b; }
.exstat > i { width: 1px; height: 12px; background: #e2e2e2; margin: 0 10px; }
.views { margin-left: auto; display: flex; align-items: center; gap: 4px; padding-right: 8px; }
.v1 { width: 22px; height: 22px; background: #cbe8f6; border: 1px solid #26a0da; display: flex; align-items: center; justify-content: center; }

.dlg { position: absolute; left: 300px; top: 299px; width: 680px; height: 162px; background: #0067b4; color: #fff; padding: 20px 24px 24px; display: flex; flex-direction: column; }
.dlg h1 { margin: 0; font-size: 26px; line-height: 34px; font-weight: 300; -webkit-text-stroke: 0.35px #fff; }
.dlg p { margin: 9px 0 0; font-size: 14.500px; line-height: 20px; }
.dlg button { align-self: flex-end; margin-top: auto; width: 90px; height: 32px; border: 2px solid #fff; background: #0078d7; color: #fff; font: 600 14.500px/20px "Open Sans", sans-serif; padding: 1px 0 0; }

.bar { position: absolute; left: 0; top: 760px; width: 1280px; height: 40px; background: #1b202a; display: flex; color: #fff; }
.start { width: 48px; display: flex; align-items: center; justify-content: center; }
.find { width: 288px; background: #f2f2f2; border: 1px solid #cfcfcf; display: flex; align-items: center; gap: 12px; padding-left: 10px; color: #222; font-size: 14.500px; }
.tb { width: 49px; display: flex; align-items: center; justify-content: center; }
.tb.run { background: linear-gradient(#76b9ed, #76b9ed) 50% 100% / 40px 2px no-repeat; }
.tb.cur { width: 48px; margin-left: 1px; background: linear-gradient(#76b9ed, #76b9ed) 50% 100% / 48px 2px no-repeat, #4a4d55; }
.tb.run:nth-child(4) { margin-left: 1px; }
.tray { margin-left: auto; display: flex; align-items: center; }
.tray > svg:nth-of-type(1) { margin-right: 26px; }
.tray > svg:nth-of-type(2) { margin-right: 12px; }
.tray > svg:nth-of-type(3) { margin-right: 8px; }
.tray > svg:nth-of-type(4) { margin-right: 7px; }
.tray > svg:nth-of-type(5) { margin-right: 8px; }
.tray > svg:nth-of-type(6) { margin-right: 8px; }
.tray > svg:nth-of-type(7) { margin-right: 10px; }
.pol { font-size: 12px; }
.clock { display: flex; flex-direction: column; align-items: center; line-height: 19px; margin: 0 18px 0 13px; padding-bottom: 2px; font-size: 11.5px; }
.tray > i { width: 1px; height: 40px; background: #777b82; margin: 0 4px 0 20px; }
</style>
